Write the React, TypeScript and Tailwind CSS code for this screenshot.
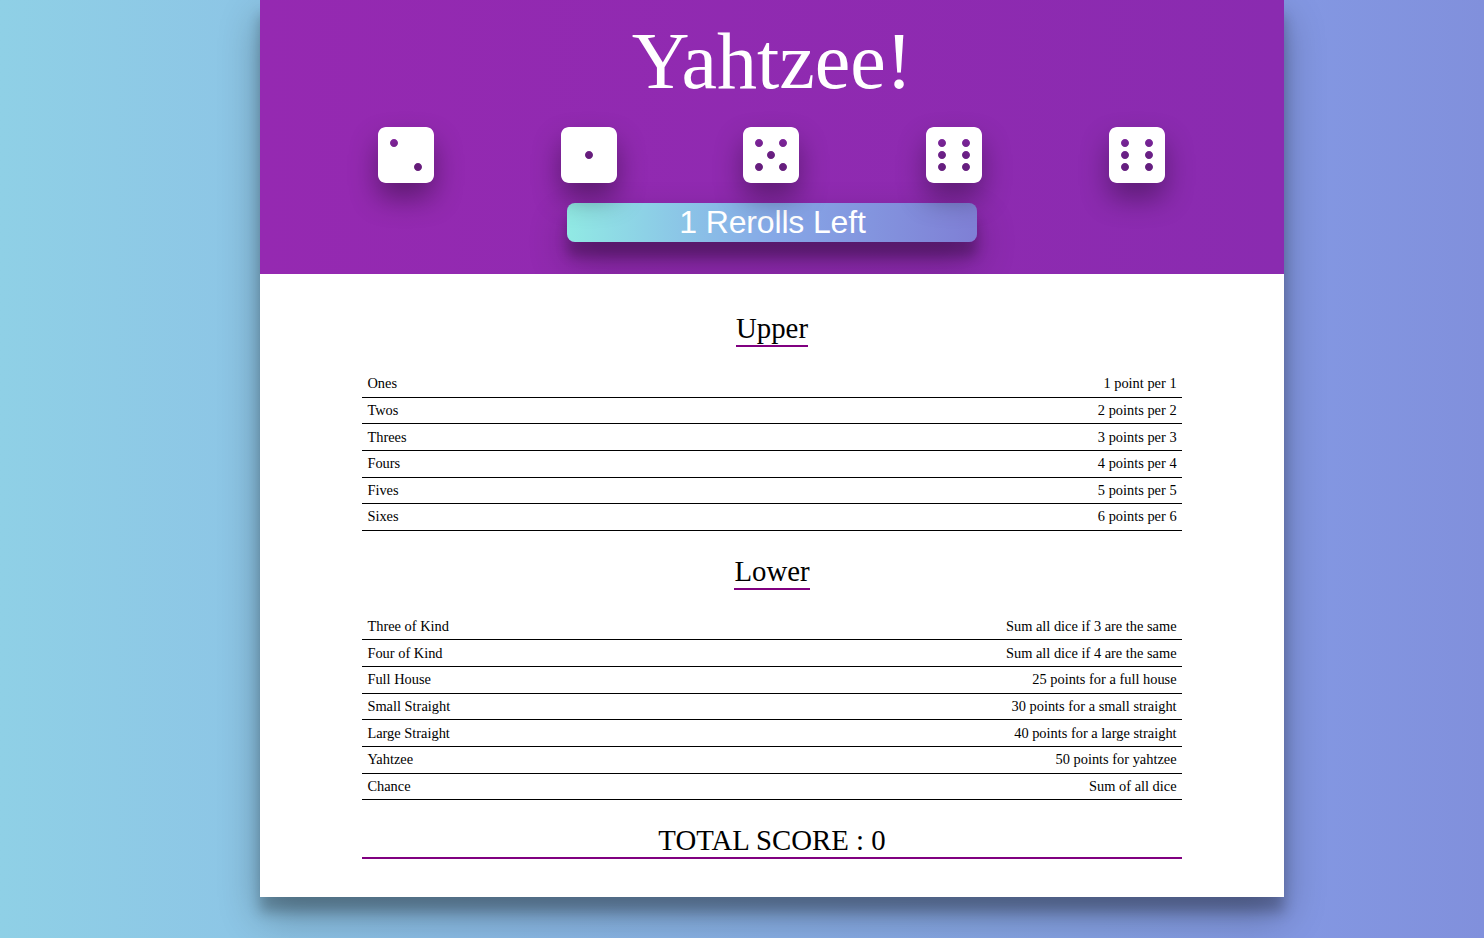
import { FaDiceOne, FaDiceTwo, FaDiceFive, FaDiceSix } from 'react-icons/fa';

const upper = [
  ['Ones', '1 point per 1'],
  ['Twos', '2 points per 2'],
  ['Threes', '3 points per 3'],
  ['Fours', '4 points per 4'],
  ['Fives', '5 points per 5'],
  ['Sixes', '6 points per 6'],
];

const lower = [
  ['Three of Kind', 'Sum all dice if 3 are the same'],
  ['Four of Kind', 'Sum all dice if 4 are the same'],
  ['Full House', '25 points for a full house'],
  ['Small Straight', '30 points for a small straight'],
  ['Large Straight', '40 points for a large straight'],
  ['Yahtzee', '50 points for yahtzee'],
  ['Chance', 'Sum of all dice'],
];

const dice = [FaDiceTwo, FaDiceOne, FaDiceFive, FaDiceSix, FaDiceSix];

function Section({ title, rows }: { title: string; rows: string[][] }) {
  return (
    <section className="w-[80%]">
      <h2 className="text-center text-[28.8px] leading-[30px] font-normal">
        <span className="inline-block pb-[2px] border-b-2 border-[#800080]">{title}</span>
      </h2>
      <div className="mt-[24px]">
        {rows.map(([name, desc]) => (
          <div key={name} className="flex justify-between border-b border-black pt-[5.3px] pb-[4.7px] px-[5px] text-[14.4px] leading-[15.64px]">
            <span>{name}</span>
            <span>{desc}</span>
          </div>
        ))}
      </div>
    </section>
  );
}

export default function App() {
  return (
    <div className="min-h-[938px] overflow-hidden bg-gradient-to-r from-[#8fd0e6] via-[#8397e2] via-[88%] to-[#8190dc] font-['Liberation_Serif',serif] text-black">
      <main className="ml-[260px] w-[1024px] h-[897px] bg-white shadow-[0_19px_38px_rgba(0,0,0,0.3),0_15px_12px_rgba(0,0,0,0.22)]">
        <header className="h-[274px] overflow-hidden bg-gradient-to-r from-[#9529b1] to-[#8a2bb0] flex flex-col items-center">
          <h1 className="mt-[15px] text-[80px] leading-[92px] font-normal text-white">Yahtzee!</h1>
          <div className="mt-[16px] ml-[-1.2px] w-[913px] grid grid-cols-5 justify-items-center">
            {dice.map((Die, i) => (
              <Die key={i} className="w-[56px] h-[64px] text-white drop-shadow-[0_15px_14px_rgba(0,0,0,0.38)]" />
            ))}
          </div>
          <button className="mt-[16px] w-[40%] h-[39px] pl-px rounded-lg bg-gradient-to-r from-[#91eae4] via-[#86a8e7] to-[#7f7fd5] text-white text-[32px] leading-[37px] tracking-[-0.15px] font-['Liberation_Sans',sans-serif] shadow-[0_19px_38px_rgba(0,0,0,0.3),0_15px_12px_rgba(0,0,0,0.22)]">
            1 Rerolls Left
          </button>
        </header>
        <div className="flex flex-col items-center pt-[39px]">
          <Section title="Upper" rows={upper} />
          <div className="h-[25px]" />
          <Section title="Lower" rows={lower} />
          <div className="w-[80%] mt-[24px] pb-px text-center text-[28.8px] leading-[32px] border-b-2 border-[#800080]">TOTAL SCORE : 0</div>
        </div>
      </main>
    </div>
  );
}
